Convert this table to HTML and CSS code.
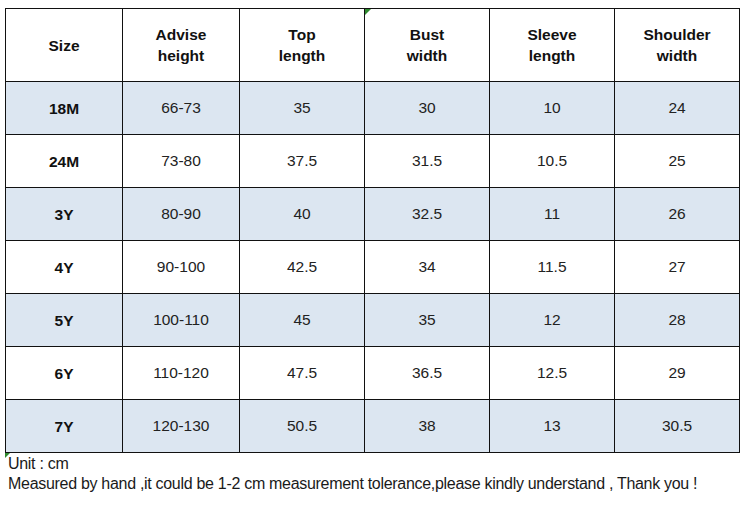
FILE: index.html
```html
<!DOCTYPE html>
<html>
<head>
<meta charset="utf-8">
<link rel="stylesheet" href="styles.css">
</head>
<body>
<div class="page">
  <table class="chart">
    <colgroup>
      <col class="c-narrow"><col class="c-narrow"><col class="c-wide"><col class="c-wide"><col class="c-wide"><col class="c-wide">
    </colgroup>
    <thead>
      <tr>
        <th>Size</th>
        <th>Advise<br>height</th>
        <th>Top<br>length</th>
        <th class="flag">Bust<br>width</th>
        <th>Sleeve<br>length</th>
        <th>Shoulder<br>width</th>
      </tr>
    </thead>
    <tbody>
      <tr class="shade"><th>18M</th><td>66-73</td><td>35</td><td>30</td><td>10</td><td>24</td></tr>
      <tr><th>24M</th><td>73-80</td><td>37.5</td><td>31.5</td><td>10.5</td><td>25</td></tr>
      <tr class="shade"><th>3Y</th><td>80-90</td><td>40</td><td>32.5</td><td>11</td><td>26</td></tr>
      <tr><th>4Y</th><td>90-100</td><td>42.5</td><td>34</td><td>11.5</td><td>27</td></tr>
      <tr class="shade"><th>5Y</th><td>100-110</td><td>45</td><td>35</td><td>12</td><td>28</td></tr>
      <tr><th>6Y</th><td>110-120</td><td>47.5</td><td>36.5</td><td>12.5</td><td>29</td></tr>
      <tr class="shade"><th>7Y</th><td>120-130</td><td>50.5</td><td>38</td><td>13</td><td>30.5</td></tr>
    </tbody>
  </table>
  <div class="notes">
    <p class="flag-left">Unit : cm</p>
    <p>Measured by hand ,it could be 1-2 cm measurement tolerance,please kindly understand , Thank you !</p>
  </div>
</div>
</body>
</html>
```
FILE: styles.css
```css
html, body {
  margin: 0;
  padding: 0;
  background: #ffffff;
}
.page {
  padding: 8px 0 0 5px;
  font-family: "Liberation Sans", Arial, sans-serif;
  color: #1e1e1e;
}
.chart {
  border-collapse: collapse;
  table-layout: fixed;
  width: 735px;
}
.c-narrow { width: 117px; }
.c-wide { width: 125px; }
.chart th,
.chart td {
  border: 1px solid #111;
  padding: 0;
  text-align: center;
  vertical-align: middle;
  font-size: 15.5px;
}
.chart th {
  font-weight: bold;
  color: #111;
  line-height: 21px;
}
.chart td {
  font-weight: normal;
  color: #222;
}
.chart thead tr { height: 73px; }
.chart tbody tr { height: 53px; }
.chart .shade th,
.chart .shade td { background: #dce6f1; }
.flag { position: relative; }
.flag::before {
  content: "";
  position: absolute;
  left: 0;
  top: 0;
  width: 0;
  height: 0;
  border-top: 6px solid #2f8a2f;
  border-right: 6px solid transparent;
}
.notes {
  padding: 1px 0 0 3px;
  font-size: 16px;
  line-height: 20px;
  color: #1a1a1a;
  letter-spacing: -0.3px;
}
.notes p { margin: 0; }
.flag-left { position: relative; }
.flag-left::before {
  content: "";
  position: absolute;
  left: -3px;
  top: -1px;
  width: 0;
  height: 0;
  border-top: 5px solid #2f8a2f;
  border-right: 5px solid transparent;
}
```
